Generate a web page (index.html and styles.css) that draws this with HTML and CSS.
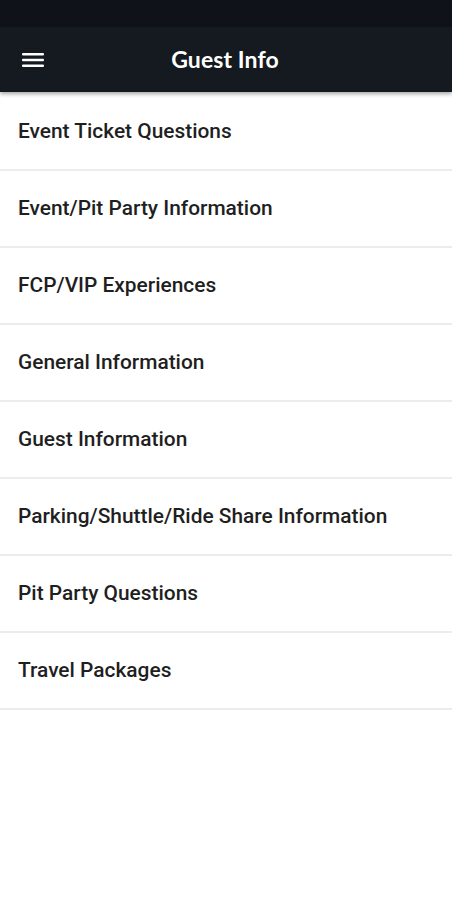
FILE: index.html
```html
<!DOCTYPE html>
<html lang="en">
<head>
    <meta charset="UTF-8">
    <meta name="viewport" content="width=device-width, initial-scale=1.0">
    <title>Guest Info</title>
    <link rel="stylesheet" href="styles.css">
</head>
<body>
    <div class="statusbar"></div>

    <header class="appbar">
        <button class="menu-btn" aria-label="Menu">
            <svg width="22" height="16" viewBox="0 0 22 16">
                <rect x="0" y="1" width="22" height="2.4" rx="1" fill="#fff"/>
                <rect x="0" y="6.8" width="22" height="2.4" rx="1" fill="#fff"/>
                <rect x="0" y="12.6" width="22" height="2.4" rx="1" fill="#fff"/>
            </svg>
        </button>
        <h1>Guest Info</h1>
    </header>

    <ul class="list">
        <li>Event Ticket Questions</li>
        <li>Event/Pit Party Information</li>
        <li>FCP/VIP Experiences</li>
        <li>General Information</li>
        <li>Guest Information</li>
        <li>Parking/Shuttle/Ride Share Information</li>
        <li>Pit Party Questions</li>
        <li>Travel Packages</li>
    </ul>
</body>
</html>
```

FILE: styles.css
```css
* {
    margin: 0;
    padding: 0;
    box-sizing: border-box;
}

body {
    background-color: #fff;
    font-family: Roboto, "Liberation Sans", sans-serif;
}

.statusbar {
    height: 27px;
    background-color: #0f1319;
}

.appbar {
    height: 65px;
    background-color: #151a20;
    display: flex;
    align-items: center;
    justify-content: center;
    position: relative;
    box-shadow: 0 2px 4px rgba(0, 0, 0, 0.35);
}

.menu-btn {
    position: absolute;
    left: 22px;
    top: 25px;
    background: none;
    border: none;
    display: flex;
}

.appbar h1 {
    color: #fff;
    font-family: Lato, "Noto Sans", sans-serif;
    font-weight: 700;
    font-size: 23px;
    letter-spacing: 0.1px;
    padding-bottom: 1px;
    padding-right: 2px;
}

.list {
    list-style: none;
    margin-top: 2px;
}

.list li {
    height: 77px;
    display: flex;
    align-items: center;
    padding-left: 18px;
    padding-bottom: 2px;
    font-size: 20.9px;
    font-weight: 500;
    color: #1f1f1f;
    border-bottom: 2px solid #ececec;
}
```
